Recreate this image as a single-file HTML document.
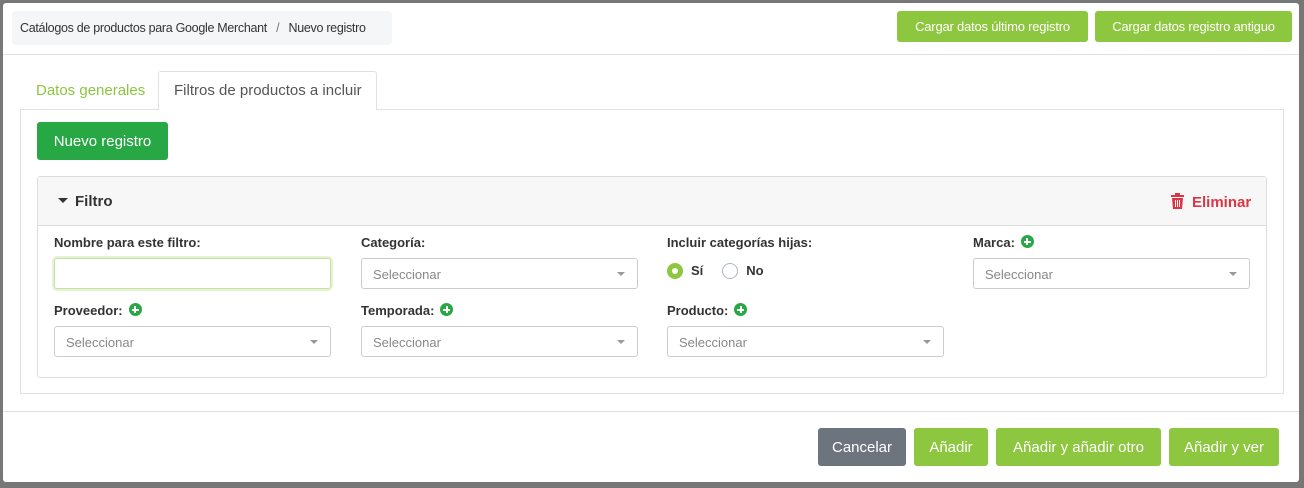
<!DOCTYPE html>
<html><head><meta charset="utf-8"><style>
*{box-sizing:border-box;margin:0;padding:0}
body{width:1304px;height:488px;background:#777;font-family:"Liberation Sans",sans-serif;position:relative;overflow:hidden;color:#333}
.a{position:absolute;white-space:nowrap}
.modal{left:3px;top:3px;width:1296px;height:479px;background:#fff;border-radius:3px}
.btn{position:absolute;color:#fff;border-radius:3px;display:flex;align-items:center;justify-content:center;font-size:14px;white-space:nowrap}
.g{background:#8dc63f}
.lbl{position:absolute;font-size:13px;font-weight:bold;color:#333;white-space:nowrap}
.sel{position:absolute;width:277px;height:31px;border:1px solid #ccc;border-radius:3px;font-size:13px;color:#888;padding:8px 0 0 11px}
.sel:after{content:"";position:absolute;right:12px;top:13px;border-left:4px solid transparent;border-right:4px solid transparent;border-top:4px solid #999}
.plus{display:inline-block;width:13px;height:13px;border-radius:50%;background:#28a745;position:relative;vertical-align:-1px;margin-left:6px}
.plus:before{content:"";position:absolute;left:3px;top:5.5px;width:7px;height:2px;background:#fff}
.plus:after{content:"";position:absolute;left:5.5px;top:3px;width:2px;height:7px;background:#fff}
</style></head><body>
<div class="a modal"></div>
<div class="a" style="left:12px;top:11px;width:380px;height:34px;background:#f5f6f8;border-radius:4px;font-size:12.5px;letter-spacing:-0.3px;color:#333;padding:10px 0 0 8px">Catálogos de productos para Google Merchant <span style="color:#777;margin:0 6px">/</span> Nuevo registro</div>
<div class="btn g" style="left:897px;top:11px;width:191px;height:31px;font-size:13px;letter-spacing:-0.2px">Cargar datos último registro</div>
<div class="btn g" style="left:1095px;top:11px;width:197px;height:31px;font-size:13px;letter-spacing:-0.2px">Cargar datos registro antiguo</div>
<div class="a" style="left:3px;top:54px;width:1296px;height:1px;background:#dee2e6"></div>
<div class="a" style="left:36px;top:82px;font-size:15px;color:#8dc63f">Datos generales</div>
<div class="a" style="left:20px;top:109px;width:1264px;height:285px;border:1px solid #dee2e6"></div>
<div class="a" style="left:158px;top:71px;width:219px;height:39px;border:1px solid #dee2e6;border-bottom:none;background:#fff;border-radius:3px 3px 0 0;font-size:15px;color:#555;padding:10px 0 0 15px">Filtros de productos a incluir</div>
<div class="btn" style="left:37px;top:122px;width:131px;height:38px;background:#28a745;font-size:15px">Nuevo registro</div>
<div class="a" style="left:37px;top:176px;width:1230px;height:202px;border:1px solid #ddd;border-radius:3px"></div>
<div class="a" style="left:38px;top:177px;width:1228px;height:49px;background:#f7f7f7;border-bottom:1px solid #ddd"></div>
<div class="a" style="left:58px;top:193px;font-size:15px;font-weight:bold;color:#333"><span style="display:inline-block;border-left:5px solid transparent;border-right:5px solid transparent;border-top:5px solid #333;vertical-align:3px;margin-right:7px"></span>Filtro</div>
<div class="a" style="left:1171px;top:193px;font-size:15px;font-weight:bold;color:#dc3545"><svg width="13" height="16" viewBox="0 0 13 16" style="vertical-align:-2px;margin-right:8px"><rect x="0" y="2" width="13" height="2" fill="#dc3545"/><rect x="4" y="0" width="5" height="2" fill="#dc3545"/><path d="M1 5h11l-1 11H2z" fill="#dc3545"/><path d="M4.5 7v7M6.5 7v7M8.5 7v7" stroke="#fff" stroke-width="1"/></svg>Eliminar</div>
<div class="lbl" style="left:54px;top:235px">Nombre para este filtro:</div>
<div class="a" style="left:54px;top:258px;width:277px;height:31px;border:1px solid #c5e29f;border-radius:3px;box-shadow:0 0 0 2px #e6f2d5"></div>
<div class="lbl" style="left:361px;top:235px">Categoría:</div>
<div class="sel" style="left:361px;top:258px">Seleccionar</div>
<div class="lbl" style="left:667px;top:235px">Incluir categorías hijas:</div>
<div class="a" style="left:667px;top:263px;font-size:13px;font-weight:bold;color:#333"><span style="display:inline-block;width:16px;height:16px;border-radius:50%;background:#8dc63f;vertical-align:-4px;position:relative;margin-right:8px"><span style="position:absolute;left:5px;top:5px;width:6px;height:6px;border-radius:50%;background:#fff"></span></span>Sí<span style="display:inline-block;width:16px;height:16px;border-radius:50%;border:1px solid #adb5bd;vertical-align:-4px;margin:0 8px 0 19px"></span>No</div>
<div class="lbl" style="left:973px;top:235px">Marca:<span class="plus"></span></div>
<div class="sel" style="left:973px;top:258px">Seleccionar</div>
<div class="lbl" style="left:54px;top:303px">Proveedor:<span class="plus"></span></div>
<div class="sel" style="left:54px;top:326px">Seleccionar</div>
<div class="lbl" style="left:361px;top:303px">Temporada:<span class="plus"></span></div>
<div class="sel" style="left:361px;top:326px">Seleccionar</div>
<div class="lbl" style="left:667px;top:303px">Producto:<span class="plus"></span></div>
<div class="sel" style="left:667px;top:326px">Seleccionar</div>
<div class="a" style="left:3px;top:411px;width:1296px;height:1px;background:#dee2e6"></div>
<div class="btn" style="left:818px;top:428px;width:88px;height:38px;background:#6c757d;font-size:15px">Cancelar</div>
<div class="btn g" style="left:914px;top:428px;width:74px;height:38px;font-size:15px">Añadir</div>
<div class="btn g" style="left:996px;top:428px;width:165px;height:38px;font-size:15px">Añadir y añadir otro</div>
<div class="btn g" style="left:1169px;top:428px;width:110px;height:38px;font-size:15px">Añadir y ver</div>
</body></html>
